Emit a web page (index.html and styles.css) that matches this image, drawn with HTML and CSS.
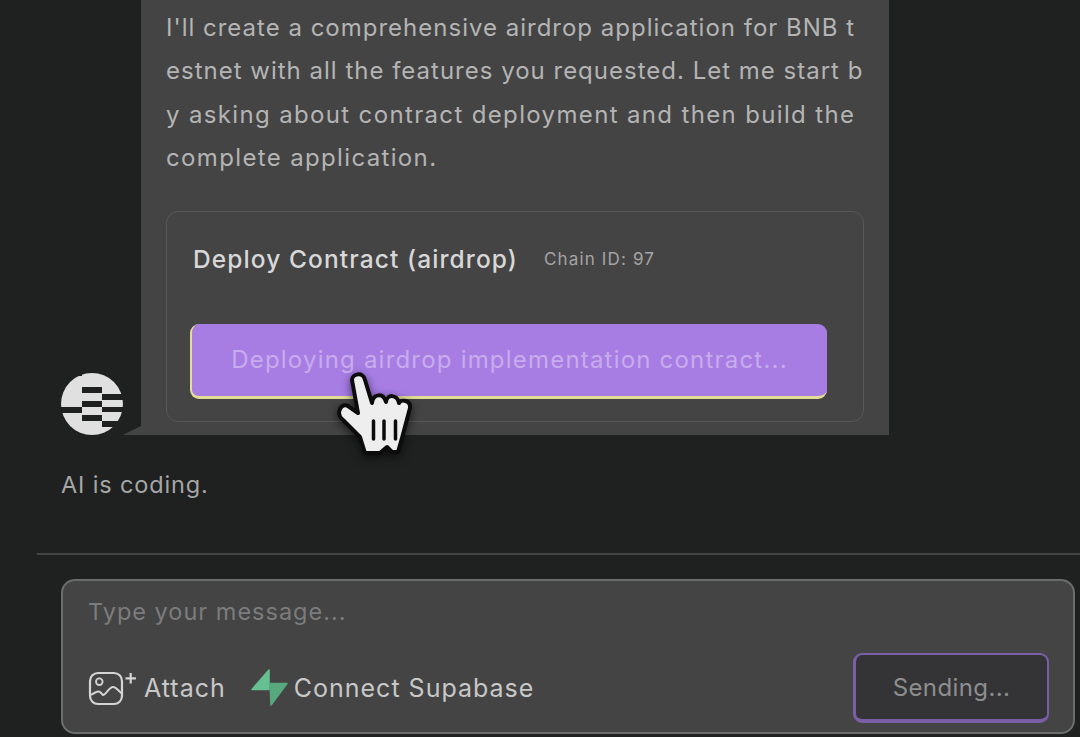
FILE: index.html
```html
<!DOCTYPE html>
<html lang="en">

<head>
    <meta charset="UTF-8">
    <meta name="viewport" content="width=device-width, initial-scale=1.0">
    <title>AI chat</title>
    <link rel="stylesheet" href="styles.css">
</head>

<body>
    <div class="chat">
        <div class="message">
            <svg class="avatar" viewBox="0 0 62 62">
                <circle cx="31" cy="31" r="31" fill="#e0e0e0" />
                <g fill="#1f2020">
                    <rect x="5" y="0" width="8" height="6" />
                    <rect x="13" y="0" width="8" height="3" />
                    <rect x="21" y="14" width="20" height="6" />
                    <rect x="41" y="21" width="21" height="6" />
                    <rect x="21" y="28" width="20" height="6" />
                    <rect x="0" y="34" width="21" height="6" />
                    <rect x="41" y="34" width="21" height="5" />
                    <rect x="21" y="42" width="20" height="6" />
                    <rect x="41" y="48" width="21" height="6" />
                </g>
            </svg>
            <div class="bubble">
                <p class="bubble_text">
                    I'll create a comprehensive airdrop application for BNB t<br>
                    estnet with all the features you requested. Let me start b<br>
                    <span class="bubble_wide">y asking about contract deployment and then build the<br>
                    complete application.</span>
                </p>
                <div class="deploy_card">
                    <div class="deploy_head">
                        <span class="deploy_title">Deploy Contract (airdrop)</span>
                        <span class="deploy_chain">Chain ID: 97</span>
                    </div>
                    <button class="deploy_btn">Deploying airdrop implementation contract...</button>
                </div>
                <svg class="hand" viewBox="0 0 80 86">
                    <path d="M17 10C17 4 28 1 30 10L37 33C38 24 48 22 51 32C52 24 62 24 64 33C66 29 76 30 75 38L67 68 63 82H57L52 77 45 83H30L25 67 8 50C0 44 6 32 13 36L23 43Z" fill="#eeeeee" stroke="#0c0c0c" stroke-width="4" stroke-linejoin="round" />
                    <path d="M38.500 51v18M49 51v18M60.500 51v18" stroke="#0c0c0c" stroke-width="3.500" stroke-linecap="round" />
                </svg>
            </div>
        </div>

        <p class="status">AI is coding.</p>
        <div class="divider"></div>

        <div class="composer">
            <div class="placeholder">Type your message...</div>
            <div class="composer_bar">
                <span class="tool tool_attach">
                    <svg class="icon_attach" viewBox="0 0 50 36">
                        <rect x="2" y="3" width="32" height="31" rx="8" fill="none" stroke="#d4d4d4" stroke-width="2.200" />
                        <circle cx="11.300" cy="11.700" r="3.300" fill="none" stroke="#d4d4d4" stroke-width="1.800" />
                        <path d="M3 25c3-2 7-5 9-3l3 3c3 0 6-8 10-8 3 0 6 4 9 7" fill="none" stroke="#d4d4d4" stroke-width="2" />
                        <path d="M42.700 3v10.600M37.500 8.300h10.400" stroke="#d4d4d4" stroke-width="2.200" />
                    </svg>
                    Attach
                </span>
                <span class="tool">
                    <svg class="icon_supabase" viewBox="0 0 38 38">
                        <path d="M19 1L2 20.500h17z" fill="#66c092" stroke="#66c092" stroke-width="1.500" stroke-linejoin="round" />
                        <path d="M20 14.500H37L21 36z" fill="#58a87f" stroke="#58a87f" stroke-width="1.500" stroke-linejoin="round" />
                    </svg>
                    Connect Supabase
                </span>
                <button class="send_btn">Sending...</button>
            </div>
        </div>
    </div>
</body>

</html>
```

FILE: styles.css
```css
* {
    padding: 0;
    margin: 0;
    box-sizing: border-box;
}

html,
body {
    height: 737px;
    overflow: hidden;
}

body {
    background-color: #1f2020;
    font-family: "Inter", "Noto Sans", sans-serif;
}

.chat {
    display: flex;
    flex-direction: column;
}

.message {
    display: flex;
    align-items: flex-end;
    gap: 18px;
    padding-left: 61px;
}

.avatar {
    width: 62px;
    height: 62px;
    flex: none;
}

.bubble {
    position: relative;
    width: 748px;
    height: 435px;
    padding: 6px 25px 0;
    background-color: #444444;
}

/* tail at the bottom left */
.bubble::before {
    content: "";
    position: absolute;
    left: -18px;
    bottom: 0;
    width: 18px;
    height: 9px;
    background-color: #444444;
    clip-path: polygon(100% 0, 100% 100%, 0 100%);
}

.bubble_text {
    font-size: 24px;
    line-height: 43.400px;
    letter-spacing: 1px;
    color: #b4b4b4;
    white-space: nowrap;
}

.bubble_wide {
    letter-spacing: 1.350px;
}

.deploy_card {
    margin-top: 31px;
    width: 698px;
    height: 211px;
    padding: 32px 36px 0 23px;
    border: 1.500px solid #585858;
    border-radius: 12px;
}

.deploy_head {
    display: flex;
    align-items: center;
    gap: 26px;
    height: 30px;
    padding-left: 3px;
}

.deploy_title {
    font-size: 24.500px;
    font-weight: 500;
    letter-spacing: 1.100px;
    color: #d8d8d8;
}

.deploy_chain {
    font-size: 17px;
    letter-spacing: 1.150px;
    color: #a4a4a4;
}

.deploy_btn {
    display: block;
    width: 637px;
    height: 75px;
    margin-top: 50px;
    border: none;
    border-left: 2px solid #e3dc96;
    border-bottom: 3px solid #e3dc96;
    border-radius: 9px;
    background-color: #a77de4;
    color: #c8acec;
    font-family: inherit;
    font-size: 24px;
    letter-spacing: 1.200px;
}

.hand {
    position: absolute;
    left: 194px;
    top: 370px;
    width: 80px;
    height: 86px;
    filter: drop-shadow(0 3px 5px rgba(0, 0, 0, .6));
}

.status {
    margin: 34px 0 0 61px;
    font-size: 23.500px;
    line-height: 32px;
    letter-spacing: .85px;
    color: #a6a6a6;
}

.divider {
    height: 2px;
    margin: 52px 0 0 37px;
    background-color: #444444;
}

.composer {
    width: 1014px;
    height: 155px;
    margin: 24px 0 0 61px;
    padding: 15px 24px 0 25px;
    border: 2px solid #6c6c6c;
    border-radius: 14px;
    background-color: #444444;
}

.placeholder {
    font-size: 23.500px;
    line-height: 32px;
    letter-spacing: 1px;
    color: #7c7c7c;
}

.composer_bar {
    display: flex;
    align-items: center;
    margin-top: 25px;
    height: 70px;
}

.tool {
    display: flex;
    align-items: center;
    gap: 6px;
    font-size: 25px;
    letter-spacing: 1px;
    color: #c8c8c8;
}

.tool_attach {
    margin-right: 24px;
}

.icon_attach {
    width: 50px;
    height: 36px;
}

.icon_supabase {
    width: 38px;
    height: 38px;
}

.send_btn {
    width: 196px;
    height: 70px;
    margin-left: auto;
    border: 2px solid #7a5fa6;
    border-left-width: 3px;
    border-bottom-width: 4px;
    border-radius: 9px;
    background-color: #343437;
    color: #8e8e8e;
    font-family: inherit;
    font-size: 24px;
    letter-spacing: .4px;
}
```
